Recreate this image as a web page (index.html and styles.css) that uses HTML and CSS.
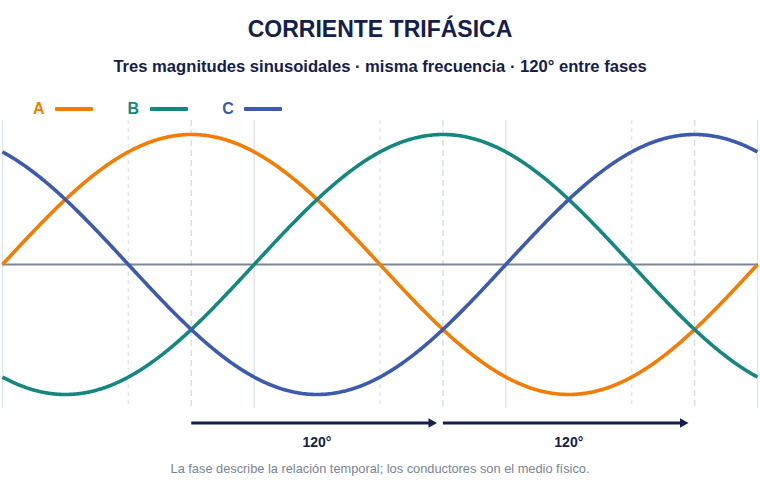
FILE: index.html
```html
<!DOCTYPE html>
<html lang="es">
<head>
<meta charset="utf-8">
<title>Corriente trifásica</title>
<link rel="stylesheet" href="styles.css">
</head>
<body>
<main class="page">
  <header class="head">
    <h1 class="title">CORRIENTE TRIFÁSICA</h1>
    <p class="subtitle">Tres magnitudes sinusoidales · misma frecuencia · 120° entre fases</p>
  </header>
  <ul class="legend">
    <li class="legend-item phase-a"><span class="legend-label">A</span><span class="legend-line"></span></li>
    <li class="legend-item phase-b"><span class="legend-label">B</span><span class="legend-line"></span></li>
    <li class="legend-item phase-c"><span class="legend-label">C</span><span class="legend-line"></span></li>
  </ul>
  <svg class="chart" viewBox="0 118 760 334" width="760" height="334" aria-label="Tres ondas sinusoidales desfasadas 120°">
    <g class="grid-solid">
      <line x1="2.5" y1="119" x2="2.5" y2="407"/>
      <line x1="254.2" y1="119" x2="254.2" y2="407"/>
      <line x1="505.8" y1="119" x2="505.8" y2="407"/>
      <line x1="757.5" y1="119" x2="757.5" y2="407"/>
    </g>
    <g class="grid-dot">
      <line x1="128.3" y1="119" x2="128.3" y2="407"/>
      <line x1="380" y1="119" x2="380" y2="407"/>
      <line x1="631.7" y1="119" x2="631.7" y2="407"/>
    </g>
    <g class="grid-dash">
      <line x1="191.25" y1="119" x2="191.25" y2="407"/>
      <line x1="442.9" y1="119" x2="442.9" y2="407"/>
      <line x1="694.6" y1="119" x2="694.6" y2="407"/>
    </g>
    <line class="axis" x1="2" y1="263.5" x2="758" y2="263.5"/>
    <path id="wave-a" class="wave wave-a" d=""/>
    <path id="wave-b" class="wave wave-b" d=""/>
    <path id="wave-c" class="wave wave-c" d=""/>
    <g class="arrow">
      <line x1="191.25" y1="422" x2="430" y2="422"/>
      <polygon points="437,422 428.5,417.2 428.5,426.8"/>
      <line x1="442.9" y1="422" x2="681" y2="422"/>
      <polygon points="688.5,422 680,417.2 680,426.8"/>
    </g>
    <text class="arrow-label" x="317" y="446">120°</text>
    <text class="arrow-label" x="568.8" y="446">120°</text>
  </svg>
  <p class="caption">La fase describe la relación temporal; los conductores son el medio físico.</p>
</main>
<script src="script.js"></script>
</body>
</html>
```

FILE: styles.css
```css
* { box-sizing: border-box; }
html, body { margin: 0; padding: 0; background: #ffffff; }
body { font-family: "Liberation Sans", Arial, sans-serif; color: #14214a; }
.page { width: 760px; height: 500px; display: flex; flex-direction: column; overflow: hidden; }
.head { padding-top: 15px; display: flex; flex-direction: column; align-items: center; }
.title { margin: 0; font-size: 23px; line-height: 28px; font-weight: 700; color: #13204b; }
.subtitle { margin: 13.5px 0 0; font-size: 16.6px; line-height: 20px; font-weight: 700; color: #13204b; }
.legend { list-style: none; margin: 22px 0 0; padding: 0 0 0 33px; display: flex; gap: 34.5px; height: 20px; }
.legend-item { display: flex; align-items: center; gap: 10.5px; }
.legend-label { font-size: 16px; line-height: 20px; font-weight: 700; }
.legend-line { width: 38px; height: 4px; border-radius: 1px; margin-top: 1px; }
.phase-a .legend-label { color: #f57c00; }
.phase-a .legend-line { background: #f57c00; }
.phase-b .legend-label { color: #14877f; }
.phase-b .legend-line { background: #14877f; }
.phase-c .legend-label { color: #3d5bad; }
.phase-c .legend-line { background: #3d5bad; }
.chart { display: block; width: 760px; height: 334px; }
.grid-solid line { stroke: #e1e6ee; stroke-width: 1.5; }
.grid-dot line { stroke: #e1e6ee; stroke-width: 1.3; stroke-dasharray: 4 4; }
.grid-dash line { stroke: #d9dfe9; stroke-width: 1.5; stroke-dasharray: 6 4; }
.axis { stroke: #7d8598; stroke-width: 2; }
.wave { fill: none; stroke-width: 3.6; stroke-linejoin: round; }
.wave-a { stroke: #f57c00; }
.wave-b { stroke: #14877f; }
.wave-c { stroke: #3d5bad; }
.arrow line { stroke: #13204b; stroke-width: 3; }
.arrow polygon { fill: #13204b; }
.arrow-label { font-family: "Liberation Sans", Arial, sans-serif; font-size: 14px; font-weight: 700; fill: #13204b; text-anchor: middle; }
.caption { margin: 8px 0 0; text-align: center; font-size: 12.8px; line-height: 16px; color: #7a8398; }
```

FILE: script.js
```js
(function () {
  var x0 = 2.5, W = 755, cy = 263.5, A = 130;
  var phases = { a: 0, b: -120, c: -240 };
  Object.keys(phases).forEach(function (id) {
    var ph = phases[id] * Math.PI / 180;
    var d = '';
    for (var i = 0; i <= W; i++) {
      var x = x0 + i;
      var th = 2 * Math.PI * i / W + ph;
      var y = cy - A * Math.sin(th);
      d += (i ? 'L' : 'M') + x.toFixed(2) + ' ' + y.toFixed(2);
    }
    document.getElementById('wave-' + id).setAttribute('d', d);
  });
})();
```
